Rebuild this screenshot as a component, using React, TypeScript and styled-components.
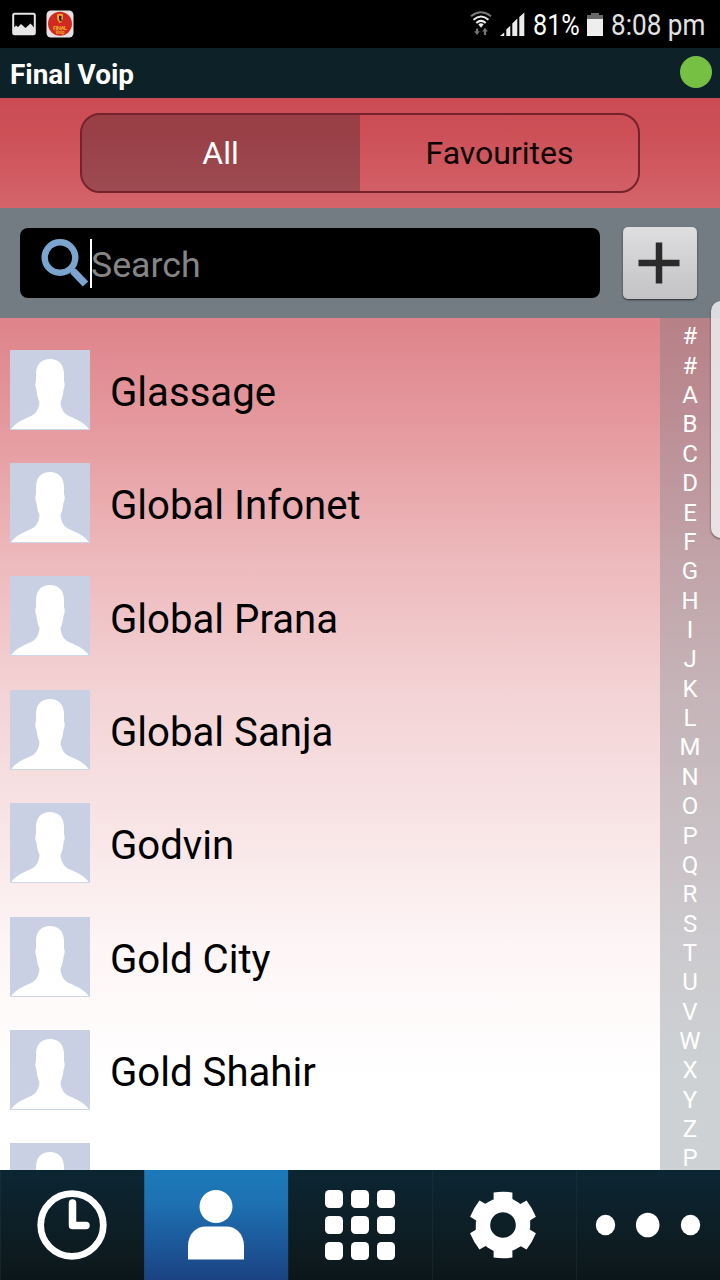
import React from 'react';
import styled, { createGlobalStyle } from 'styled-components';

const GlobalStyle = createGlobalStyle`
  *, *::before, *::after { box-sizing: border-box; }
  body { margin: 0; background: #000; }
`;

const Screen = styled.div`
  width: 720px;
  height: 1280px;
  display: flex;
  flex-direction: column;
  overflow: hidden;
  position: relative;
  font-family: Roboto, 'Liberation Sans', sans-serif;
  color: #000;
`;

const StatusBar = styled.div`
  height: 48px;
  flex: none;
  display: flex;
  align-items: center;
  justify-content: space-between;
  padding: 0 14px 0 12px;
  background: #000;
`;

const StatusGroup = styled.div`
  display: flex;
  align-items: center;
  height: 48px;
`;

const StatusText = styled.span<{ $width: number; $scale: number; $tone: string }>`
  display: block;
  width: ${(p) => p.$width}px;
  margin-left: 8px;
  white-space: nowrap;
  font-size: 30px;
  line-height: 48px;
  padding-top: 1px;
  color: ${(p) => p.$tone};
  transform: scaleX(${(p) => p.$scale});
  transform-origin: 0 50%;

  & > span {
    display: block;
    width: max-content;
  }
`;

const Icon = styled.svg<{ $gap?: number }>`
  display: block;
  flex: none;
  margin-left: ${(p) => p.$gap ?? 0}px;
`;

const TitleBar = styled.header`
  height: 50px;
  flex: none;
  display: flex;
  align-items: center;
  justify-content: space-between;
  padding: 0 8px 0 10px;
  background: #0d2129;
`;

const Title = styled.h1`
  margin: 0;
  padding-top: 3px;
  font-size: 27.9px;
  line-height: 32px;
  font-weight: 700;
  color: #fff;
`;

const OnlineDot = styled.span`
  width: 32px;
  height: 32px;
  margin-bottom: 3px;
  border-radius: 50%;
  background: #76c044;
`;

const Body = styled.main`
  height: 1072px;
  flex: none;
  display: flex;
  flex-direction: column;
  background: linear-gradient(
    180deg,
    #cb4b53 0px,
    #cd5057 36px,
    #d4646b 110px,
    #de848a 222px,
    #e59a9f 330px,
    #edb9bc 460px,
    #f3d2d4 590px,
    #f8e4e5 720px,
    #fdf5f6 850px,
    #fff 980px
  );
`;

const TabStrip = styled.div`
  height: 110px;
  flex: none;
  display: flex;
  justify-content: center;
  padding-top: 15px;
`;

const Segmented = styled.div`
  width: 560px;
  height: 80px;
  display: flex;
  overflow: hidden;
  border: 2px solid #74222b;
  border-radius: 20px;
`;

const Segment = styled.button<{ $active?: boolean }>`
  width: 50%;
  border: 0;
  padding: ${(p) => (p.$active ? '0 1px 0 0' : '0 0 0 1px')};
  font: 400 32px/40px Roboto, 'Liberation Sans', sans-serif;
  color: ${(p) => (p.$active ? '#fff' : '#0c0203')};
  background: ${(p) => (p.$active ? 'rgba(50, 34, 38, 0.33)' : 'transparent')};
`;

const SearchBar = styled.div`
  height: 110px;
  flex: none;
  display: flex;
  align-items: center;
  padding: 0 23px 0 20px;
  justify-content: space-between;
  background: #737c83;
`;

const SearchField = styled.div`
  width: 580px;
  height: 70px;
  display: flex;
  align-items: center;
  padding-left: 20px;
  border-radius: 8px;
  background: #000;
`;

const Caret = styled.span`
  width: 2px;
  height: 49px;
  background: #fff;
`;

const Placeholder = styled.span`
  margin-left: -1px;
  padding-top: 3px;
  font-size: 35.7px;
  line-height: 42px;
  color: #858585;
`;

const AddButton = styled.button`
  width: 74px;
  height: 72px;
  padding: 0 2px 0 0;
  display: flex;
  align-items: center;
  justify-content: center;
  border: 0;
  border-radius: 5px;
  background: linear-gradient(180deg, #dedddf, #c3c2c4);
  box-shadow: 0 1px 2px rgba(20, 20, 25, 0.75);
`;

const Content = styled.div`
  height: 852px;
  display: flex;
  overflow: hidden;
`;

const ContactList = styled.ul`
  flex: 1;
  margin: 0;
  padding: 15px 0 0;
  list-style: none;
`;

const ContactRow = styled.li`
  height: 113.4px;
  display: flex;
  align-items: center;
  padding-left: 10px;
`;

const ContactName = styled.span`
  margin-left: 20px;
  padding-top: 6.4px;
  font-size: 40.15px;
  line-height: 48px;
`;

const IndexBar = styled.div`
  width: 60px;
  flex: none;
  display: flex;
  flex-direction: column;
  align-items: center;
  padding-top: 4.4px;
  background: rgba(112, 122, 132, 0.35);
`;

const IndexLetter = styled.span`
  flex: none;
  height: 29.36px;
  font-size: 24px;
  line-height: 29.36px;
  color: #fff;

  &:last-child {
    height: 25px;
  }
`;

const EdgeHandle = styled.div`
  position: absolute;
  left: 711px;
  top: 301px;
  width: 20px;
  height: 237px;
  border-radius: 14px;
  background: rgba(240, 240, 242, 0.84);
  box-shadow: 0 1px 2px rgba(60, 40, 45, 0.8);
`;

const NavBar = styled.nav`
  height: 110px;
  flex: none;
  display: flex;
  background: linear-gradient(180deg, #0b2633, #0e1b20 75%, #0b161a);
`;

const NavItem = styled.button<{ $active?: boolean }>`
  flex: 1;
  padding: 0 2px 0 0;
  display: flex;
  align-items: center;
  justify-content: center;
  border: 0;
  border-left: 1px solid rgba(40, 60, 70, 0.35);
  background: ${(p) =>
    p.$active ? 'linear-gradient(180deg, #1c79b9, #1d72b3 28%, #1b4283)' : 'transparent'};
`;

const contacts = [
  'Glassage',
  'Global Infonet',
  'Global Prana',
  'Global Sanja',
  'Godvin',
  'Gold City',
  'Gold Shahir',
];

const indexLetters = '##ABCDEFGHIJKLMNOPQRSTUVWXYZP'.split('');

const PictureIcon = () => (
  <Icon width="24" height="24" viewBox="0 0 24 24">
    <rect x="1.2" y="1.7" width="21.6" height="20.6" rx="1.5" fill="none" stroke="#e6e6e6" strokeWidth="2" />
    <path d="M2 15.5 4 13.5l2 1.5 3-3 4.500 4 5-4.500 3.500 4V22H2z" fill="#e6e6e6" />
  </Icon>
);

const AppBadge = () => (
  <Icon $gap={10} width="28" height="28" viewBox="0 0 28 28">
    <rect x="0.5" y="0.5" width="27" height="27" rx="4.5" fill="#eadfe2" />
    <circle cx="14" cy="13.7" r="12" fill="#d12920" />
    <path d="M11 4.5q3-1.5 6 0 .5 6-3 8.700-3.500-3-3-8.700z" fill="#e3ae27" />
    <path d="M13 5.5l3 1-1 2 1 2-2 1-1-3z" fill="#3a1510" />
    <text x="14" y="19.5" fontSize="6" fontWeight="700" textAnchor="middle" textLength="14" fill="#e8ad25">FINAL</text>
    <text x="14" y="24" fontSize="4.5" fontWeight="700" textAnchor="middle" fill="#e8ad25">Voip</text>
  </Icon>
);

const WifiIcon = () => (
  <Icon width="22" height="26" viewBox="0 0 22 26" fill="none" strokeWidth="2">
    <path d="M1 5.2Q11-2.600 21 5.200" stroke="#777" />
    <path d="M3.500 8.700Q11 2.200 18.500 8.700" stroke="#eee" />
    <path d="M6.300 11.900Q11 7.800 15.700 11.900" stroke="#eee" />
    <path d="M8.300 13.300Q11 11.300 13.700 13.300L11 16.800z" fill="#eee" />
    <path d="M7 17.500v4M15 20v4" stroke="#777" strokeWidth="2.2" />
    <path d="M4.200 20.300h5.600L7 24zM12.200 20.500h5.600L15 16.800z" fill="#777" />
  </Icon>
);

const SignalIcon = () => (
  <Icon $gap={8} width="25" height="25" viewBox="0 0 25 25" fill="#ececec">
    <path d="M0 24 4.200 20.500V24zM6.300 17.500l4-3.700V24h-4zM12.300 11.500l5-5V24h-5zM19.300 5l5-4.500V24h-5z" />
  </Icon>
);

const BatteryIcon = () => (
  <Icon $gap={7} width="16" height="25" viewBox="0 0 16 25">
    <path d="M4 1h8v2h4v4H0V3h4z" fill="#696969" />
    <rect y="7" width="16" height="17" fill="#eee" />
  </Icon>
);

const SearchIcon = () => (
  <Icon width="50" height="52" viewBox="0 0 50 52" fill="none" stroke="#7ba4cf">
    <circle cx="20" cy="20.5" r="15.3" strokeWidth="6.4" />
    <path d="m29 29.500 6.500 7" strokeWidth="5.5" />
    <path d="m33 34 12.500 13" strokeWidth="7.5" />
  </Icon>
);

const Avatar = () => (
  <Icon width="80" height="80" viewBox="0 0 80 80">
    <rect width="80" height="80" fill="#cad0e3" />
    <path
      d="M0.5 80C5 73 14 69 20 66.500 26 64 29 59 29.500 52 27.500 48 27 44 26.500 40 25 36 25 34 26 31V24C26 14 32 9 40 9S54 14 54 24v7c1 3 1 5-.5 9-.5 4-1 8-3 12 .5 7 3.500 12 9.500 14.500C66 69 75 73 79.500 80z"
      fill="#fff"
    />
    <path d="M0 79.500h80" stroke="#cad8ea" />
  </Icon>
);

const ClockIcon = () => (
  <Icon width="72" height="72" viewBox="0 0 72 72" fill="none" stroke="#fff">
    <circle cx="36" cy="36" r="31.3" strokeWidth="6.7" />
    <path d="M36.500 14v22.500H50" strokeWidth="7.5" strokeLinecap="round" strokeLinejoin="round" />
  </Icon>
);

const PersonIcon = () => (
  <Icon width="56" height="70" viewBox="0 0 56 70" fill="#fff">
    <circle cx="28" cy="16.5" r="16.5" />
    <path d="M0 69.500V56C0 44 8 36.500 18 36.500h20C48 36.500 56 44 56 56v13.500z" />
  </Icon>
);

const KeypadIcon = () => (
  <Icon width="70" height="70" viewBox="0 0 70 70" fill="#fff">
    {[0, 26, 52].map((y) =>
      [0, 26, 52].map((x) => <rect key={`${x}-${y}`} x={x} y={y} width="18" height="18" rx="4.5" />),
    )}
  </Icon>
);

const GearIcon = () => (
  <Icon width="70" height="68" viewBox="-34 -34 70 68">
    <circle r="19.8" fill="none" stroke="#fff" strokeWidth="14" />
    {[0, 60, 120, 180, 240, 300].map((a) => (
      <path key={a} transform={`rotate(${a})`} d="M-11-18-9.400-26V-32.600Q0-33.900 9.400-32.600V-26L17-21.500 11-18z" fill="#fff" />
    ))}
  </Icon>
);

const MoreIcon = () => (
  <Icon width="106" height="30" viewBox="0 0 106 30" fill="#fff">
    <ellipse cx="10.5" cy="15" rx="9.7" ry="10.3" />
    <ellipse cx="52.7" cy="15" rx="11.8" ry="12.3" />
    <ellipse cx="95.5" cy="15" rx="9.7" ry="10.3" />
  </Icon>
);

export default function App() {
  return (
    <Screen>
      <GlobalStyle />
      <StatusBar>
        <StatusGroup>
          <PictureIcon />
          <AppBadge />
        </StatusGroup>
        <StatusGroup>
          <WifiIcon />
          <SignalIcon />
          <StatusText $width={47} $scale={0.84} $tone="#fff">
            <span>81%</span>
          </StatusText>
          <BatteryIcon />
          <StatusText $width={95} $scale={0.87} $tone="#e2e2e2">
            <span>8:08 pm</span>
          </StatusText>
        </StatusGroup>
      </StatusBar>
      <TitleBar>
        <Title>Final Voip</Title>
        <OnlineDot />
      </TitleBar>
      <Body>
        <TabStrip>
          <Segmented>
            <Segment $active>All</Segment>
            <Segment>Favourites</Segment>
          </Segmented>
        </TabStrip>
        <SearchBar>
          <SearchField>
            <SearchIcon />
            <Caret />
            <Placeholder>Search</Placeholder>
          </SearchField>
          <AddButton aria-label="Add contact">
            <Icon width="42" height="42" viewBox="0 0 42 42" stroke="#2b2b2c" strokeWidth="6.5">
              <path d="M0.500 21h41M21 0.500v41" />
            </Icon>
          </AddButton>
        </SearchBar>
        <Content>
          <ContactList>
            {contacts.map((name) => (
              <ContactRow key={name}>
                <Avatar />
                <ContactName>{name}</ContactName>
              </ContactRow>
            ))}
            <ContactRow>
              <Avatar />
            </ContactRow>
          </ContactList>
          <IndexBar>
            {indexLetters.map((letter, i) => (
              <IndexLetter key={i}>{letter}</IndexLetter>
            ))}
          </IndexBar>
        </Content>
      </Body>
      <NavBar>
        <NavItem aria-label="Recents">
          <ClockIcon />
        </NavItem>
        <NavItem $active aria-label="Contacts">
          <PersonIcon />
        </NavItem>
        <NavItem aria-label="Keypad">
          <KeypadIcon />
        </NavItem>
        <NavItem aria-label="Settings">
          <GearIcon />
        </NavItem>
        <NavItem aria-label="More">
          <MoreIcon />
        </NavItem>
      </NavBar>
      <EdgeHandle />
    </Screen>
  );
}
